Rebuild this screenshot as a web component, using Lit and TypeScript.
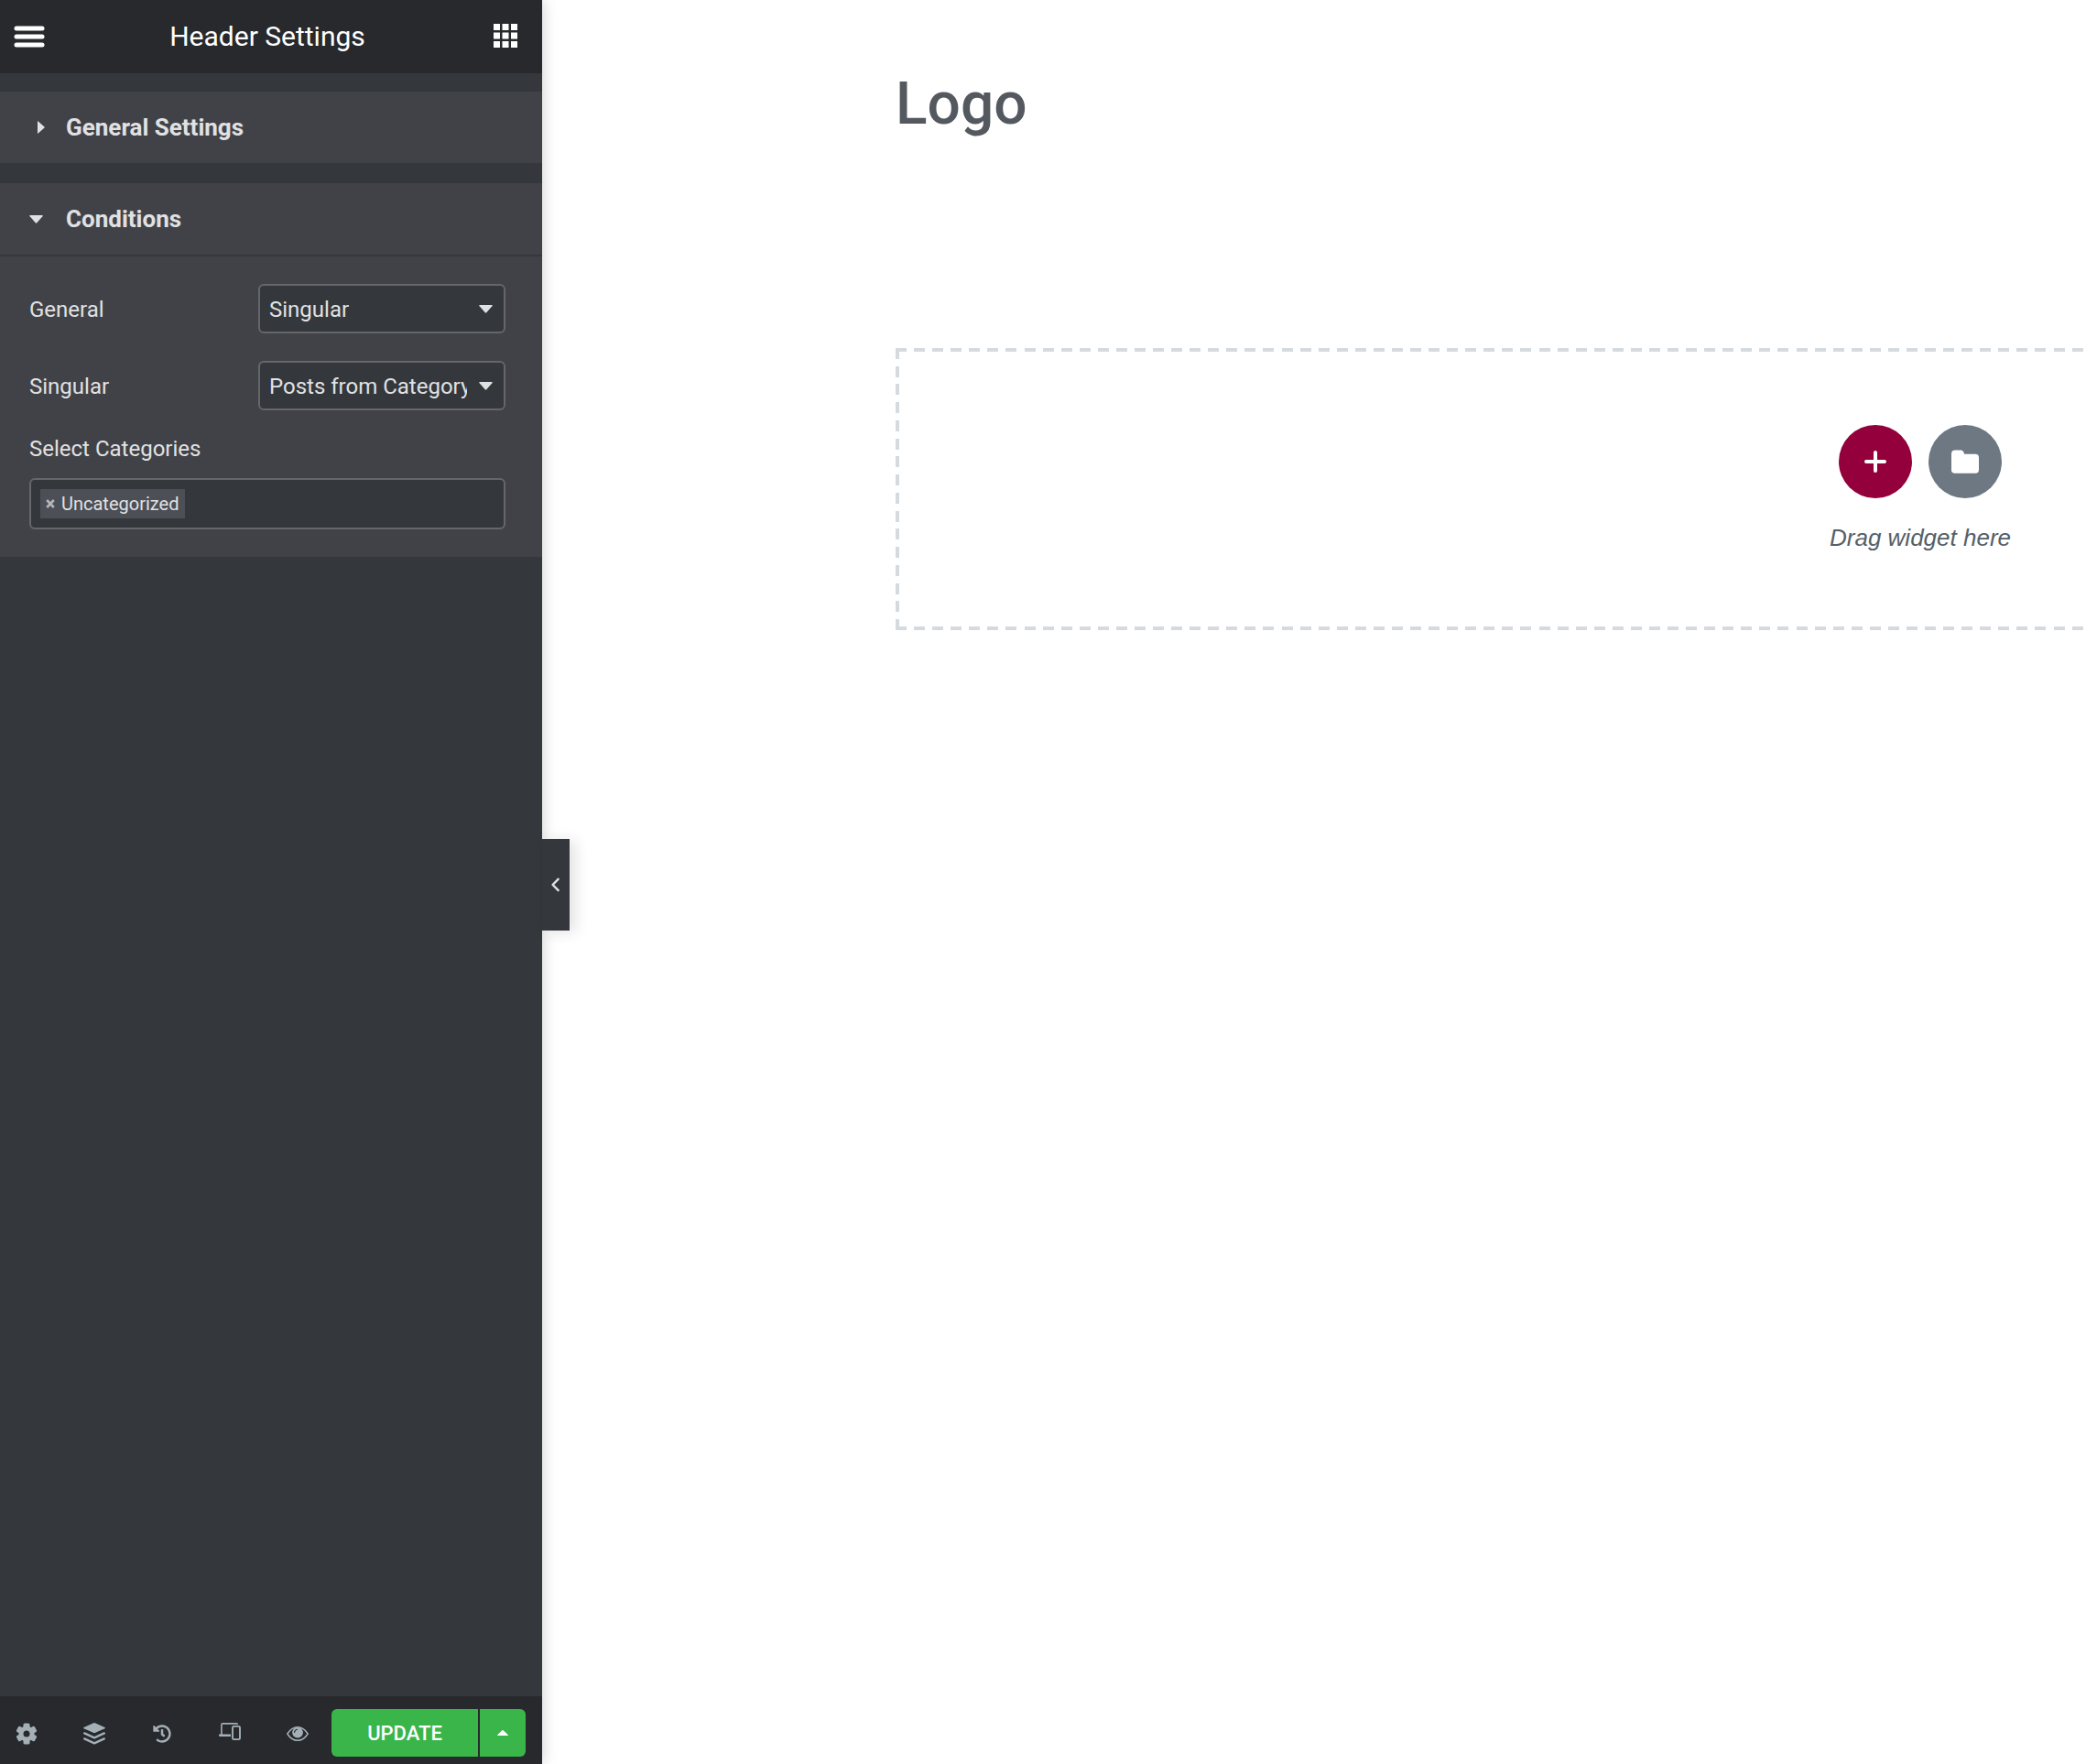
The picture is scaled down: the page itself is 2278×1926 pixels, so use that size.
import { LitElement, html, css, svg } from "lit";
import { customElement, state } from "lit/decorators.js";

const gearTooth = (angle: number) =>
  svg`<rect x="8.5" y="0.5" width="7" height="7" rx="1.6" transform="rotate(${angle} 12 12)"></rect>`;

const icons = {
  menu: html`<svg width="34" height="24" viewBox="0 0 34 24" aria-hidden="true">
    <rect x="0.5" y="0.5" width="33" height="5" rx="2.5"></rect>
    <rect x="0.5" y="9.5" width="33" height="5" rx="2.5"></rect>
    <rect x="0.5" y="18.5" width="33" height="5" rx="2.5"></rect>
  </svg>`,
  apps: html`<svg width="26" height="26" viewBox="0 0 26 26" aria-hidden="true">
    ${[0, 9.5, 19].map((y) =>
      [0, 9.5, 19].map((x) => svg`<rect x=${x} y=${y} width="7" height="7"></rect>`)
    )}
  </svg>`,
  caretRight: html`<svg width="8" height="14" viewBox="0 0 8 14" aria-hidden="true">
    <path d="M0 0.6V13.4Q0 14.2 0.7 13.5L7.5 7.6Q8 7 7.5 6.4L0.7 0.5Q0 -0.2 0 0.6Z"></path>
  </svg>`,
  caretDown: html`<svg width="15" height="9" viewBox="0 0 16 10" preserveAspectRatio="none" aria-hidden="true">
    <path d="M1 0H15Q16.4 0.2 15.4 1.5L8.8 9.2Q8 10 7.2 9.2L0.6 1.5Q-0.4 0.2 1 0Z"></path>
  </svg>`,
  caretUp: html`<svg width="12" height="6" viewBox="0 0 12 6" aria-hidden="true">
    <path d="M0.6 6H11.4Q12.3 5.8 11.6 5L6.6 0.3Q6 -0.2 5.4 0.3L0.4 5Q-0.3 5.8 0.6 6Z"></path>
  </svg>`,
  chevron: html`<svg width="10" height="16" viewBox="0 0 10 16" aria-hidden="true">
    <path class="stroke" d="M7.6 1.8L1.6 8L7.6 14.2" stroke-width="2.4" stroke-linecap="round" stroke-linejoin="round"></path>
  </svg>`,
  gear: html`<svg width="24" height="24" viewBox="0 0 24 24" aria-hidden="true">
    ${[0, 60, 120, 180, 240, 300].map(gearTooth)}
    <circle class="stroke" cx="12" cy="12" r="6" stroke-width="5"></circle>
  </svg>`,
  layers: html`<svg width="24" height="24" viewBox="0 0 24 24" aria-hidden="true">
    <path d="M11.2 0.2Q12 -0.1 12.8 0.2L23.4 5Q24.4 5.7 23.4 6.3L12.8 11.1Q12 11.4 11.2 11.1L0.6 6.3Q-0.4 5.7 0.6 5Z"></path>
    <path class="stroke" d="M1.2 11.4L12 16.3L22.8 11.4M1.2 17.4L12 22.4L22.8 17.4" stroke-width="2.4" stroke-linecap="round" stroke-linejoin="round"></path>
  </svg>`,
  history: html`<svg width="20" height="22" viewBox="0 0 512 512" aria-hidden="true">
    <path d="M504 255.531c.253 136.64-111.18 248.372-247.82 248.468-59.015.042-113.223-20.53-155.822-54.911-11.077-8.94-11.905-25.541-1.839-35.607l11.267-11.267c8.609-8.609 22.353-9.551 31.891-1.984C173.062 425.135 212.781 440 256 440c101.705 0 184-82.311 184-184 0-101.705-82.311-184-184-184-48.814 0-93.149 18.969-126.068 49.932l50.754 50.754c10.08 10.08 2.941 27.314-11.313 27.314H24c-8.837 0-16-7.163-16-16V38.627c0-14.254 17.234-21.393 27.314-11.314l49.372 49.372C129.209 34.136 189.552 8 256 8c136.81 0 247.747 110.78 248 247.531zm-180.912 78.784l9.823-12.63c8.138-10.463 6.253-25.542-4.21-33.679L288 256.349V152c0-13.255-10.745-24-24-24h-16c-13.255 0-24 10.745-24 24v135.651l65.409 50.874c10.463 8.137 25.541 6.253 33.679-4.21z"></path>
  </svg>`,
  devices: html`<svg width="24" height="24" viewBox="0 1 24 24" aria-hidden="true">
    <path class="stroke" d="M2.9 15V3.2Q2.9 1.9 4.2 1.9H19Q20.4 1.9 20.4 3" stroke-width="1.6"></path>
    <path d="M0 13.6H13V16H1.2Q0 16 0 14.8Z"></path>
    <rect class="stroke" x="15" y="4.9" width="8" height="14.2" rx="1.4" stroke-width="1.9"></rect>
  </svg>`,
  eye: html`<svg width="24" height="24" viewBox="0 0 24 24" aria-hidden="true">
    <path class="stroke" d="M0.8 12Q5.4 4.7 12 4.7T23.2 12Q18.6 19.3 12 19.3T0.8 12Z" stroke-width="1.5" stroke-linejoin="round"></path>
    <circle cx="12" cy="10.6" r="5.9"></circle>
    <path class="notch" d="M8.6 10.4Q8.8 7.6 11.6 7.2" stroke-width="1.1" stroke-linecap="round"></path>
  </svg>`,
  plus: html`<svg width="24" height="24" viewBox="0 0 24 24" aria-hidden="true">
    <path class="stroke" d="M12 2V22M2 12H22" stroke-width="4" stroke-linecap="round"></path>
  </svg>`,
  folder: html`<svg width="30" height="26" viewBox="0 0 30 26" aria-hidden="true">
    <path d="M4 0.4H10Q13.6 0.6 14 4.7H26.2Q30 4.7 30 8.5V22Q30 25.8 26.2 25.8H3.8Q0 25.8 0 22V4.4Q0 0.6 4 0.4Z"></path>
  </svg>`,
  remove: html`<svg width="10" height="10" viewBox="0 0 10 10" aria-hidden="true">
    <path class="stroke" d="M1.2 1L8.8 9M8.8 1L1.2 9" stroke-width="2.6"></path>
  </svg>`,
};

const tools = [
  { label: "Settings", icon: icons.gear },
  { label: "Navigator", icon: icons.layers },
  { label: "History", icon: icons.history },
  { label: "Responsive Mode", icon: icons.devices },
  { label: "Preview Changes", icon: icons.eye },
];

@customElement("app-root")
export class AppRoot extends LitElement {
  @state() private generalOpen = false;
  @state() private conditionsOpen = true;
  @state() private categories = ["Uncategorized"];

  static styles = css`
    :host {
      display: flex;
      height: 100vh;
      overflow: hidden;
      background: #fff;
      font-family: Roboto, "Liberation Sans", sans-serif;
    }
    * {
      box-sizing: border-box;
    }
    button {
      display: flex;
      align-items: center;
      justify-content: center;
      margin: 0;
      padding: 0;
      border: 0;
      background: none;
      color: inherit;
      font: inherit;
      cursor: pointer;
    }
    svg {
      display: block;
      flex: none;
      fill: currentColor;
    }
    .stroke {
      fill: none;
      stroke: currentColor;
    }
    .notch {
      fill: none;
      stroke: #27292c;
    }
    .panel {
      position: relative;
      z-index: 1;
      display: flex;
      flex: none;
      flex-direction: column;
      width: 592px;
      background: #34373b;
      color: #e0e1e3;
      box-shadow: 0 0 16px rgba(0, 0, 0, 0.2);
    }
    .header {
      display: grid;
      grid-template-columns: 64px 1fr 72px;
      align-items: center;
      height: 80px;
      background: #27292c;
      color: #fff;
    }
    .header button {
      height: 78px;
    }
    .header .apps {
      align-self: start;
      padding-right: 8px;
    }
    .title {
      margin: 0;
      font-size: 30px;
      font-weight: 400;
      line-height: 40px;
      text-align: center;
    }
    .sections {
      display: flex;
      flex: 1;
      flex-direction: column;
      gap: 22px;
      padding-top: 20px;
    }
    .section {
      background: #414247;
    }
    .heading {
      margin: 0;
      font-size: 26px;
      font-weight: 700;
      line-height: 32px;
    }
    .heading button {
      justify-content: flex-start;
      width: 100%;
      height: 78px;
      padding-left: 32px;
    }
    .caret {
      display: flex;
      width: 40px;
    }
    .caret.closed {
      padding-left: 9px;
    }
    .body {
      display: flex;
      flex-direction: column;
      gap: 30px;
      padding: 30px 40px 30px 32px;
      border-top: 2px solid #34373b;
      font-size: 24px;
      line-height: 28px;
    }
    .row {
      display: flex;
      align-items: center;
      justify-content: space-between;
    }
    .row label {
      padding-top: 2px;
    }
    .picker {
      position: relative;
      width: 270px;
    }
    .picker select {
      display: block;
      appearance: none;
      width: 100%;
      height: 54px;
      margin: 0;
      padding: 2px 40px 0 10px;
      border: 2px solid #64666a;
      border-radius: 6px;
      background: #34373b;
      color: inherit;
      font: inherit;
    }
    .picker svg {
      position: absolute;
      top: 23px;
      right: 14px;
      pointer-events: none;
    }
    .stack {
      display: flex;
      flex-direction: column;
      gap: 18px;
      margin-top: -2px;
    }
    .tags {
      display: flex;
      align-items: center;
      gap: 10px;
      height: 56px;
      padding: 0 10px;
      border: 2px solid #64666a;
      border-radius: 6px;
      background: #34373b;
    }
    .tag {
      display: flex;
      align-items: center;
      gap: 7px;
      height: 32px;
      padding: 0 7px 0 6px;
      background: #4c4f56;
      font-size: 20px;
      line-height: 24px;
    }
    .tag button {
      color: #b4b6ba;
    }
    .tags input {
      flex: 1;
      min-width: 0;
      padding: 0;
      border: 0;
      outline: 0;
      background: none;
      color: inherit;
      font: inherit;
    }
    .footer {
      display: flex;
      align-items: center;
      height: 74px;
      padding: 14px 18px 8px 17px;
      background: #27292c;
    }
    .tools {
      display: flex;
      flex: 1;
      gap: 50px;
      padding-top: 2px;
      color: #a4afb7;
    }
    .tools button {
      width: 24px;
      height: 24px;
    }
    .publish {
      display: flex;
      gap: 2px;
      color: #fff;
    }
    .publish button {
      height: 52px;
      background: #39b54a;
    }
    .publish .update {
      width: 160px;
      border-radius: 6px 0 0 6px;
      font-size: 22px;
      font-weight: 500;
      text-transform: uppercase;
    }
    .publish .options {
      width: 50px;
      border-radius: 0 6px 6px 0;
    }
    .collapse {
      position: absolute;
      top: calc(50% - 47px);
      left: 100%;
      width: 30px;
      height: 100px;
      background: #34373b;
      box-shadow: 6px 2px 16px rgba(0, 0, 0, 0.12);
    }
    .canvas {
      flex: 1;
      min-width: 0;
      overflow: hidden;
      padding: 74px 0 0 386px;
      color: #54595f;
    }
    .logo {
      margin: 0;
      font-size: 64px;
      font-weight: 500;
      line-height: 80px;
    }
    .dropzone {
      --dash: #d5dadf;
      --x: repeating-linear-gradient(90deg, var(--dash) 0 12px, transparent 12px calc((100% - 12px) / 111));
      --y: repeating-linear-gradient(180deg, var(--dash) 0 12px, transparent 12px calc((100% - 12px) / 15));
      display: flex;
      flex-direction: column;
      align-items: center;
      justify-content: center;
      gap: 28px;
      width: 2240px;
      height: 308px;
      margin-top: 226px;
      padding: 0 2px 2px 0;
      background:
        var(--x) top / 100% 4px no-repeat,
        var(--x) bottom / 100% 4px no-repeat,
        var(--y) left / 4px 100% no-repeat,
        var(--y) right / 4px 100% no-repeat;
    }
    .actions {
      display: flex;
      gap: 18px;
      color: #fff;
    }
    .actions button {
      width: 80px;
      height: 80px;
      border-radius: 50%;
      background: #6d7882;
    }
    .actions .add {
      background: #93003c;
    }
    .hint {
      margin: 0;
      color: #556068;
      font-family: "Liberation Sans", Arial, sans-serif;
      font-size: 26px;
      font-style: italic;
      line-height: 30px;
    }
  `;

  private sectionHeading(label: string, open: boolean, toggle: () => void) {
    return html`<h2 class="heading">
      <button aria-expanded=${open} @click=${toggle}>
        <span class="caret ${open ? "" : "closed"}">${open ? icons.caretDown : icons.caretRight}</span>${label}
      </button>
    </h2>`;
  }

  private picker(id: string, label: string, options: string[]) {
    return html`<div class="row">
      <label for=${id}>${label}</label>
      <div class="picker">
        <select id=${id}>
          ${options.map((option) => html`<option>${option}</option>`)}
        </select>
        ${icons.caretDown}
      </div>
    </div>`;
  }

  render() {
    return html`
      <aside class="panel">
        <header class="header">
          <button aria-label="Menu">${icons.menu}</button>
          <h1 class="title">Header Settings</h1>
          <button class="apps" aria-label="Widgets">${icons.apps}</button>
        </header>
        <div class="sections">
          <section class="section">
            ${this.sectionHeading("General Settings", this.generalOpen, () => (this.generalOpen = !this.generalOpen))}
          </section>
          <section class="section">
            ${this.sectionHeading("Conditions", this.conditionsOpen, () => (this.conditionsOpen = !this.conditionsOpen))}
            ${this.conditionsOpen
              ? html`<div class="body">
                  ${this.picker("general", "General", ["Singular"])}
                  ${this.picker("singular", "Singular", ["Posts from Category"])}
                  <div class="stack">
                    <label for="categories">Select Categories</label>
                    <div class="tags">
                      ${this.categories.map(
                        (name) => html`<span class="tag">
                          <button
                            aria-label="Remove ${name}"
                            @click=${() => (this.categories = this.categories.filter((c) => c !== name))}
                          >
                            ${icons.remove}</button
                          >${name}
                        </span>`
                      )}
                      <input id="categories" type="text" autocomplete="off" />
                    </div>
                  </div>
                </div>`
              : null}
          </section>
        </div>
        <footer class="footer">
          <div class="tools">
            ${tools.map((tool) => html`<button aria-label=${tool.label}>${tool.icon}</button>`)}
          </div>
          <div class="publish">
            <button class="update">Update</button>
            <button class="options" aria-label="Save options">${icons.caretUp}</button>
          </div>
        </footer>
        <button class="collapse" aria-label="Hide panel">${icons.chevron}</button>
      </aside>
      <main class="canvas">
        <h2 class="logo">Logo</h2>
        <section class="dropzone">
          <div class="actions">
            <button class="add" aria-label="Add new section">${icons.plus}</button>
            <button aria-label="Add template">${icons.folder}</button>
          </div>
          <p class="hint">Drag widget here</p>
        </section>
      </main>
    `;
  }
}
